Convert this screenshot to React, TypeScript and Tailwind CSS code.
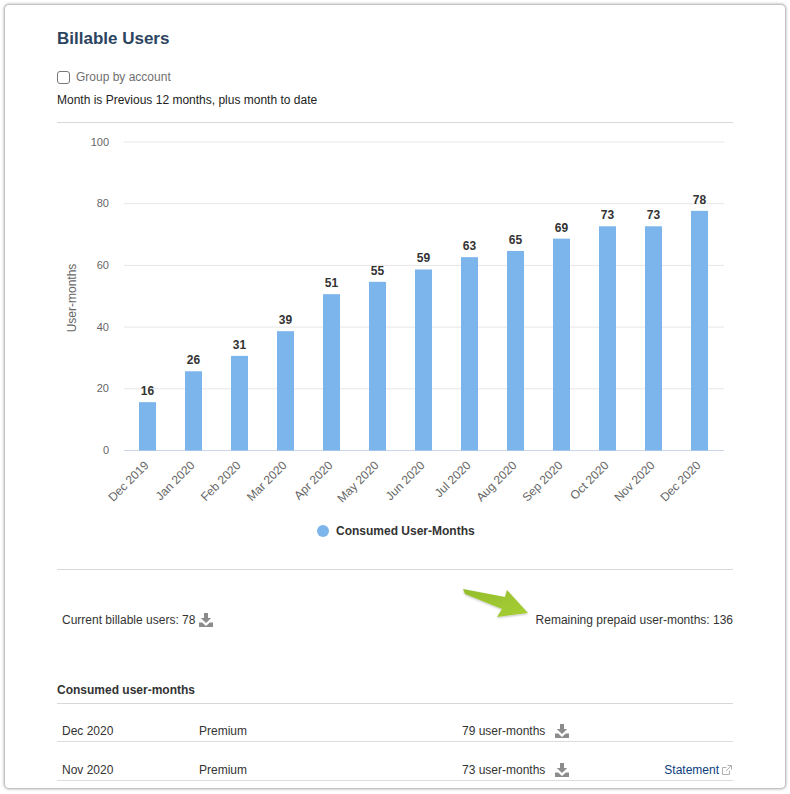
const bars = [
  { label: "Dec 2019", value: 16 },
  { label: "Jan 2020", value: 26 },
  { label: "Feb 2020", value: 31 },
  { label: "Mar 2020", value: 39 },
  { label: "Apr 2020", value: 51 },
  { label: "May 2020", value: 55 },
  { label: "Jun 2020", value: 59 },
  { label: "Jul 2020", value: 63 },
  { label: "Aug 2020", value: 65 },
  { label: "Sep 2020", value: 69 },
  { label: "Oct 2020", value: 73 },
  { label: "Nov 2020", value: 73 },
  { label: "Dec 2020", value: 78 },
];

const TOP = 19;
const BOTTOM = 327.5;
const LEFT = 67;
const STEP = 46;

function yFor(v: number) {
  return BOTTOM - ((BOTTOM - TOP) * v) / 100;
}

function DownloadIcon() {
  return (
    <svg width="14" height="14" viewBox="0 0 14 14" className="shrink-0">
      <path d="M5 0h4v5h3.2L7 10 1.8 5H5z" fill="#8c8c8c" />
      <path d="M0 9.5h3.2L7 13l3.8-3.5H14V14H0z" fill="#8c8c8c" />
    </svg>
  );
}

function Chart() {
  return (
    <svg width="676" height="414" className="block" style={{ fontFamily: "'Liberation Sans', Arial, sans-serif" }}>
      {[100, 80, 60, 40, 20].map((v) => (
        <line key={v} x1={LEFT} x2={667} y1={yFor(v)} y2={yFor(v)} stroke="#e6e6e6" />
      ))}
      <line x1={LEFT} x2={667} y1={BOTTOM} y2={BOTTOM} stroke="#ccd6eb" />
      {[100, 80, 60, 40, 20, 0].map((v) => (
        <text key={v} x={52} y={yFor(v) + 3.5} textAnchor="end" fontSize="11" fill="#666666">
          {v}
        </text>
      ))}
      <text transform="translate(19 175) rotate(-90)" textAnchor="middle" fontSize="12" fill="#666666">
        User-months
      </text>
      {bars.map((b, i) => {
        const cx = 90.5 + i * STEP;
        const top = yFor(b.value) + 1;
        return (
          <g key={b.label + i}>
            <rect x={cx - 8.5} y={top} width="17" height={BOTTOM - top} fill="#7cb5ec" />
            <text x={cx} y={top - 7} textAnchor="middle" fontSize="12" fontWeight="700" fill="#333333">
              {b.value}
            </text>
            <text
              transform={`translate(${cx + 2} 343) rotate(-45)`}
              textAnchor="end"
              fontSize="12"
              fill="#666666"
            >
              {b.label}
            </text>
          </g>
        );
      })}
      <circle cx="266" cy="408" r="6" fill="#7cb5ec" />
      <text x="279" y="412" fontSize="12" fontWeight="700" fill="#333333">
        Consumed User-Months
      </text>
    </svg>
  );
}

function GreenArrow() {
  return (
    <svg width="76" height="40" viewBox="0 0 76 40" className="absolute left-[405px] top-[15px]">
      <defs>
        <linearGradient id="arrow" x1="0" y1="0" x2="1" y2="1">
          <stop offset="0" stopColor="#94bd2c" />
          <stop offset="1" stopColor="#a6cf35" />
        </linearGradient>
        <filter id="soft" x="-20%" y="-20%" width="140%" height="150%">
          <feDropShadow dx="0" dy="1" stdDeviation="1" floodColor="#000" floodOpacity="0.25" />
        </filter>
      </defs>
      <path d="M1 4L43 12L45 5L66 28L35 32L40 24L3 9Z" fill="url(#arrow)" filter="url(#soft)" />
    </svg>
  );
}

function Row({ month, count, statement, height }: { month: string; count: string; statement?: boolean; height: string }) {
  return (
    <div className={`flex items-end border-b border-[#dddddd] pb-[2px] pl-[5px] text-[#333333] ${height}`}>
      <span className="w-[137px]">{month}</span>
      <span className="w-[263px]">Premium</span>
      <span className="flex items-center gap-[10px]">
        {count}
        <DownloadIcon />
      </span>
      {statement && (
        <span className="mr-[1px] ml-auto flex items-center gap-[3px] text-[#0b3c7d]">
          Statement
          <svg width="10" height="10" viewBox="0 0 10 10" fill="none" stroke="#a8a8a8" strokeWidth="0.9">
            <path d="M7.5 5.5v4h-7v-7h4M5.5.5h4v4M9.5.5L4 6" />
          </svg>
        </span>
      )}
    </div>
  );
}

export default function App() {
  return (
    <div className="h-[794px] bg-white p-[4px] font-['Liberation_Sans',Arial,sans-serif] text-[12px] leading-[16px]">
      <div className="h-[785px] overflow-hidden rounded-[5px] border border-[#c4c4c4] bg-white px-[52px] pt-[24px] shadow-[0_0_3px_rgba(0,0,0,0.35)]">
        <h1 className="text-[17px] leading-[20px] font-bold text-[#2c4460]">Billable Users</h1>
        <label className="mt-[20px] flex items-center gap-[6px] text-[#707070]">
          <input type="checkbox" className="h-[13px] w-[13px] appearance-none rounded-[3px] border border-[#777777] bg-white" />
          Group by account
        </label>
        <p className="mt-[7px] text-[#222222]">Month is Previous 12 months, plus month to date</p>
        <div className="mt-[14px] border-t border-[#d8d8d8]">
          <Chart />
        </div>
        <div className="relative mt-[32px] flex h-[100px] items-start justify-between border-t border-[#d8d8d8] pt-[42px] text-[#333333]">
          <span className="flex items-center gap-[4px] pl-[5px]">
            Current billable users: 78
            <DownloadIcon />
          </span>
          <span>Remaining prepaid user-months: 136</span>
          <GreenArrow />
        </div>
        <h2 className="mt-[13px] font-bold text-[#333333]">Consumed user-months</h2>
        <div className="mt-[5px] border-t border-[#d8d8d8]">
          <Row month="Dec 2020" count="79 user-months" height="h-[38px]" />
          <Row month="Nov 2020" count="73 user-months" statement height="h-[39px]" />
        </div>
      </div>
    </div>
  );
}
